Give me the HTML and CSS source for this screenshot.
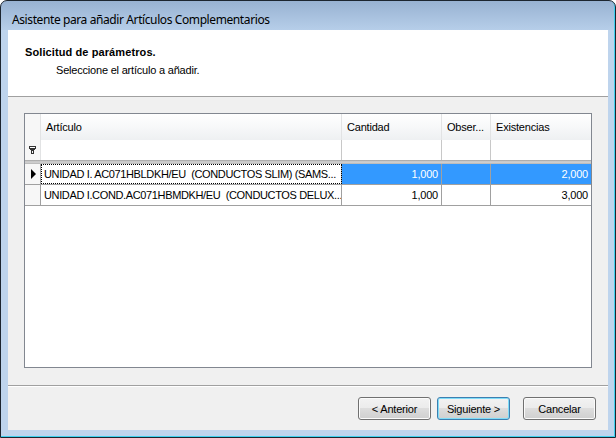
FILE: index.html
```html
<!DOCTYPE html>
<html lang="es">
<head>
  <meta charset="UTF-8" />
  <title>Asistente para añadir Artículos Complementarios</title>
  <link rel="stylesheet" href="styles.css">
</head>
<body>

  <div class="window">
    <!-- Title bar -->
    <div class="titlebar">Asistente para añadir Artículos Complementarios</div>

    <div class="client">
      <!-- Wizard header -->
      <div class="wizard-head">
        <div class="head-title">Solicitud de parámetros.</div>
        <div class="head-sub">Seleccione el artículo a añadir.</div>
      </div>

      <!-- Article grid -->
      <div class="grid">
        <div class="grid-row grid-header">
          <div class="cell ind"></div>
          <div class="cell">Artículo</div>
          <div class="cell">Cantidad</div>
          <div class="cell">Obser...</div>
          <div class="cell">Existencias</div>
        </div>
        <div class="grid-row grid-filter">
          <div class="cell ind">
            <svg width="7" height="8" viewBox="0 0 7 8">
              <rect x="0" y="0" width="7" height="1" fill="#333" />
              <rect x="0" y="1" width="1" height="2" fill="#333" />
              <rect x="6" y="1" width="1" height="2" fill="#333" />
              <rect x="1" y="1" width="5" height="1" fill="#fff" />
              <rect x="0" y="2" width="7" height="1" fill="#333" />
              <rect x="1" y="3" width="5" height="1" fill="#333" />
              <rect x="2" y="4" width="3" height="1" fill="#333" />
              <rect x="2" y="5" width="1" height="2" fill="#333" />
              <rect x="4" y="5" width="1" height="2" fill="#333" />
              <rect x="2" y="7" width="3" height="1" fill="#333" />
            </svg>
          </div>
          <div class="cell"></div>
          <div class="cell"></div>
          <div class="cell"></div>
          <div class="cell"></div>
        </div>
        <div class="grid-sep"></div>
        <div class="grid-row data selected">
          <div class="cell ind"><span class="arrow"></span></div>
          <div class="cell text focus">UNIDAD I. AC071HBLDKH/EU&nbsp; (CONDUCTOS SLIM) (SAMS...</div>
          <div class="cell num">1,000</div>
          <div class="cell num"></div>
          <div class="cell num">2,000</div>
        </div>
        <div class="grid-row data">
          <div class="cell ind"></div>
          <div class="cell text">UNIDAD I.COND.AC071HBMDKH/EU&nbsp; (CONDUCTOS DELUX...</div>
          <div class="cell num">1,000</div>
          <div class="cell num"></div>
          <div class="cell num">3,000</div>
        </div>
      </div>

      <!-- Buttons -->
      <div class="wizard-foot">
        <button class="btn">&lt; Anterior</button>
        <button class="btn default">Siguiente &gt;</button>
        <button class="btn cancel">Cancelar</button>
      </div>
    </div>
  </div>

</body>
</html>
```

FILE: styles.css
```css
* {
  margin: 0;
  padding: 0;
  box-sizing: border-box;
}

body {
  font-family: 'Liberation Sans', Arial, sans-serif;
  font-size: 11px;
  letter-spacing: -0.2px;
  color: #000;
  background: #fff;
}

.window {
  width: 616px;
  height: 438px;
  border: 1px solid #1c2530;
  border-radius: 7px 7px 0 0;
  padding: 0 7px 7px 7px;
  background: linear-gradient(#98b2d2 0, #b6cee9 29px, #bed4ed 29px);
  box-shadow: inset -1px -1px 0 #3fd0ee;
  display: flex;
  flex-direction: column;
}

.titlebar {
  height: 29px;
  padding: 7px 0 0 4px;
  display: flex;
  align-items: center;
  font-family: 'Noto Sans', sans-serif;
  font-size: 12px;
  letter-spacing: -0.4px;
  color: #000;
}

.client {
  flex: 1;
  background: #f0f0f0;
  display: flex;
  flex-direction: column;
}

.wizard-head {
  height: 67px;
  background: #fff;
  border-bottom: 1px solid #a0a0a0;
  padding: 16px 0 0 17px;
}

.head-title {
  font-weight: bold;
  letter-spacing: 0.1px;
  line-height: 13px;
}

.head-sub {
  line-height: 13px;
  margin-top: 5px;
  padding-left: 31px;
}

.grid {
  margin: 16px 16px 0 16px;
  height: 255px;
  border: 1px solid #828790;
  background: #fff;
}

.grid-row {
  display: grid;
  grid-template-columns: 16px 301px 100px 49px 1fr;
}

.cell {
  border-right: 1px solid #a0a0a0;
  padding: 0 3px;
  display: flex;
  align-items: center;
  white-space: nowrap;
  overflow: hidden;
}

.cell:last-child {
  border-right: none;
}

.grid-header {
  height: 26px;
  background: linear-gradient(#ffffff, #f7f8f9 50%, #eef0f2);
}

.grid-header .cell {
  border-right-color: #e2e3e4;
  padding-left: 5px;
}

.grid-header .ind {
  background: #f7f7f7;
}

.grid-filter {
  height: 20px;
}

.grid-filter .cell {
  border-right-color: #c8c8c8;
}

.grid-filter .ind {
  padding-left: 4px;
  background: #f7f7f7;
  border-right-color: #e2e3e4;
}

.grid-sep {
  height: 4px;
  background: linear-gradient(#a0a0a0, #d6d6d6 50%, #b4b4b4);
}

.data {
  height: 21px;
  border-bottom: 1px solid #a0a0a0;
}

.data .ind {
  background: #f7f7f7;
  padding-left: 6px;
}

.text {
  letter-spacing: -0.36px;
  padding-right: 0;
}

.num {
  justify-content: flex-end;
}

.selected .num {
  background: #3399ff;
  color: #fff;
}

.focus {
  outline: 1px dotted #000;
  outline-offset: -1px;
}

.arrow {
  width: 0;
  height: 0;
  border-top: 5px solid transparent;
  border-bottom: 5px solid transparent;
  border-left: 5px solid #000;
}

.wizard-foot {
  margin-top: 17px;
  border-top: 1px solid #a0a0a0;
  box-shadow: inset 0 1px 0 #fff;
  padding: 11px 12px 0 0;
  display: flex;
  justify-content: flex-end;
  gap: 6px;
}

.btn {
  width: 73px;
  height: 23px;
  border: 1px solid #707070;
  border-radius: 3px;
  background: linear-gradient(#f2f2f2 0%, #ebebeb 50%, #dddddd 50%, #cfcfcf 100%);
  box-shadow: inset 0 0 0 1px #fbfbfb;
  font-family: inherit;
  font-size: 11px;
  letter-spacing: -0.2px;
  color: #000;
}

.btn.default {
  border-color: #3c7fb1;
  box-shadow: inset 0 0 0 1px #7fdcf8;
}

.btn.cancel {
  margin-left: 7px;
}
```
